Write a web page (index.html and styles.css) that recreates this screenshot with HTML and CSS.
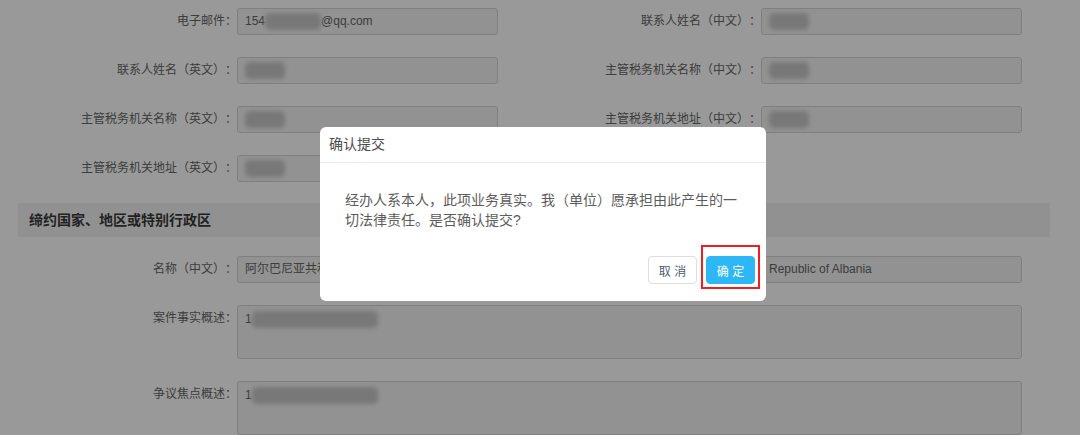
FILE: index.html
```html
<!DOCTYPE html>
<html lang="zh-CN">
<head>
    <meta charset="UTF-8">
    <meta name="viewport" content="width=device-width, initial-scale=1.0">
    <title>确认提交</title>
    <link rel="stylesheet" href="styles.css">
</head>
<body>
    <div class="page">
        <div class="form-grid top-grid">
            <div class="form-item">
                <label class="form-label">电子邮件：</label>
                <div class="form-input">154<span class="blur w56"></span>@qq.com</div>
            </div>
            <div class="form-item">
                <label class="form-label">联系人姓名（中文）：</label>
                <div class="form-input"><span class="blur"></span></div>
            </div>
            <div class="form-item">
                <label class="form-label">联系人姓名（英文）：</label>
                <div class="form-input"><span class="blur"></span></div>
            </div>
            <div class="form-item">
                <label class="form-label">主管税务机关名称（中文）：</label>
                <div class="form-input"><span class="blur"></span></div>
            </div>
            <div class="form-item">
                <label class="form-label">主管税务机关名称（英文）：</label>
                <div class="form-input"><span class="blur"></span></div>
            </div>
            <div class="form-item">
                <label class="form-label">主管税务机关地址（中文）：</label>
                <div class="form-input"><span class="blur"></span></div>
            </div>
            <div class="form-item">
                <label class="form-label">主管税务机关地址（英文）：</label>
                <div class="form-input"><span class="blur"></span></div>
            </div>
        </div>

        <div class="section-title">缔约国家、地区或特别行政区</div>

        <div class="form-grid">
            <div class="form-item">
                <label class="form-label">名称（中文）：</label>
                <div class="form-input">阿尔巴尼亚共和国</div>
            </div>
            <div class="form-item">
                <label class="form-label">名称（英文）：</label>
                <div class="form-input">Republic of Albania</div>
            </div>
            <div class="form-item wide">
                <label class="form-label">案件事实概述：</label>
                <div class="form-input textarea">1<span class="blur w126"></span></div>
            </div>
            <div class="form-item wide">
                <label class="form-label">争议焦点概述：</label>
                <div class="form-input textarea">1<span class="blur w126"></span></div>
            </div>
        </div>
    </div>

    <div class="mask"></div>

    <div class="modal">
        <div class="modal-header">确认提交</div>
        <div class="modal-body">经办人系本人，此项业务真实。我（单位）愿承担由此产生的一切法律责任。是否确认提交?</div>
        <div class="modal-footer">
            <button class="btn btn-cancel">取 消</button>
            <span class="btn-wrap">
                <button class="btn btn-ok">确 定</button>
                <span class="mark"></span>
            </span>
        </div>
    </div>
</body>
</html>
```

FILE: styles.css
```css
*{
    box-sizing: border-box;
}
body{
    margin: 0;
    background: #fff;
    font-family: "Liberation Sans", "Noto Sans CJK SC", sans-serif;
    font-size: 12px;
    color: #606266;
    text-spacing-trim: space-all;
}
.page{
    padding-top: 8px;
}
.form-grid{
    display: grid;
    grid-template-columns: 524px 524px;
    row-gap: 22px;
}
.form-item{
    display: flex;
}
.form-item.wide{
    grid-column: 1 / -1;
}
.form-label{
    width: 237px;
    flex-shrink: 0;
    text-align: right;
    line-height: 27px;
    color: #666;
}
.form-input{
    width: 261px;
    height: 27px;
    padding: 0 7px;
    border: 1px solid #d4d4d4;
    border-radius: 3px;
    background: #f4f4f4;
    line-height: 25px;
    white-space: nowrap;
    overflow: hidden;
    color: #666;
}
.wide .form-input{
    width: 785px;
}
.form-input.textarea{
    height: 54px;
    padding-top: 4px;
    line-height: 18px;
}
.blur{
    display: inline-block;
    width: 40px;
    height: 17px;
    vertical-align: middle;
    background: #c8c8c8;
    border-radius: 5px;
    filter: blur(2px);
}
.blur.w56{
    width: 56px;
}
.blur.w126{
    width: 126px;
}
.section-title{
    margin: 21px 30px 19px 18px;
    height: 34px;
    padding-left: 11px;
    line-height: 34px;
    background: #f2f2f2;
    font-size: 14px;
    font-weight: 700;
    color: #3a3a3a;
}
.mask{
    position: fixed;
    inset: 0;
    background: rgba(0, 0, 0, 0.4);
}
.modal{
    position: fixed;
    left: 320px;
    top: 127px;
    width: 446px;
    background: #fff;
    border-radius: 6px;
}
.modal-header{
    height: 36px;
    padding: 0 9px;
    line-height: 35px;
    font-size: 14px;
    color: #4a4a4a;
    border-bottom: 1px solid #e9eaec;
}
.modal-body{
    padding: 27px 25px 0;
    font-size: 14px;
    line-height: 20px;
    color: #5c5c5c;
}
.modal-footer{
    display: flex;
    justify-content: flex-end;
    gap: 9px;
    padding: 26px 11px 17px;
}
.btn{
    width: 49px;
    height: 28px;
    padding: 0;
    border-radius: 4px;
    font-family: inherit;
    font-size: 12px;
}
.btn-cancel{
    background: #fff;
    border: 1px solid #dcdee2;
    color: #515a6e;
}
.btn-ok{
    background: #2db7f5;
    border: 1px solid #2db7f5;
    color: #fff;
}
.btn-wrap{
    position: relative;
    display: flex;
}
.mark{
    position: absolute;
    inset: -11px -5px -5px -5px;
    border: 2px solid #f01e1e;
}
```
